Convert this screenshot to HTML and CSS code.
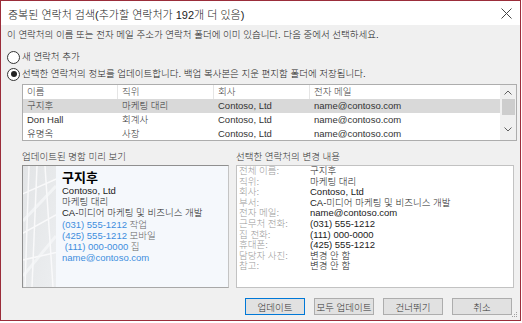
FILE: index.html
```html
<!DOCTYPE html>
<html>
<head>
    <title>중복된 연락처 검색</title>
    <link rel="stylesheet" href="styles.css">
</head>
<body>
    <div class="window">
        <div class="titlebar">
            <span class="title">중복된 연락처 검색(추가할 연락처가 192개 더 있음)</span>
            <svg class="close" width="11" height="11" viewBox="0 0 11 11">
                <path d="M0.5 0.5 L10.5 10.5 M10.5 0.5 L0.5 10.5" stroke="#444" stroke-width="1" fill="none"/>
            </svg>
        </div>

        <div class="content">
            <p class="intro">이 연락처의 이름 또는 전자 메일 주소가 연락처 폴더에 이미 있습니다. 다음 중에서 선택하세요.</p>

            <label class="radio first"><span class="dot"></span>새 연락처 추가</label>
            <label class="radio checked"><span class="dot"></span>선택한 연락처의 정보를 업데이트합니다. 백업 복사본은 지운 편지함 폴더에 저장됩니다.</label>

            <div class="list">
                <div class="grid">
                    <div class="row head">
                        <span>이름</span><span>직위</span><span>회사</span><span>전자 메일</span>
                    </div>
                    <div class="row selected">
                        <span>구지후</span><span>마케팅 대리</span><span>Contoso, Ltd</span><span>name@contoso.com</span>
                    </div>
                    <div class="row">
                        <span>Don Hall</span><span>회계사</span><span>Contoso, Ltd</span><span>name@contoso.com</span>
                    </div>
                    <div class="row">
                        <span>유명옥</span><span>사장</span><span>Contoso, Ltd</span><span>name@contoso.com</span>
                    </div>
                </div>
                <div class="scrollbar">
                    <svg width="8" height="5" viewBox="0 0 8 5"><path d="M0.5 4.5 L4 1 L7.5 4.5" stroke="#606060" fill="none"/></svg>
                    <div class="thumb"></div>
                    <div class="track"></div>
                    <svg width="8" height="5" viewBox="0 0 8 5"><path d="M0.5 0.5 L4 4 L7.5 0.5" stroke="#606060" fill="none"/></svg>
                </div>
            </div>

            <div class="panes">
                <div class="pane left">
                    <div class="pane-label">업데이트된 명함 미리 보기</div>
                    <div class="card">
                        <svg class="card-art" width="33" height="121" viewBox="0 0 33 121" preserveAspectRatio="none">
                            <defs>
                                <linearGradient id="g" x1="0" y1="0" x2="1" y2="1">
                                    <stop offset="0" stop-color="#e2e4e6"/>
                                    <stop offset="1" stop-color="#eceef0"/>
                                </linearGradient>
                            </defs>
                            <rect width="33" height="121" fill="url(#g)"/>
                            <path d="M6 0 L2 121 M14 0 L9 121 M-5 30 L40 10 M-5 70 L40 45 M-5 95 L40 85 M22 0 L30 121" stroke="#fbfbfc" stroke-width="1.5" fill="none" opacity="0.9"/>
                            <path d="M0 55 L33 20 M0 110 L33 70" stroke="#f7f8f9" stroke-width="3" fill="none" opacity="0.7"/>
                        </svg>
                        <div class="card-text">
                            <div class="card-name">구지후</div>
                            <div>Contoso, Ltd</div>
                            <div>마케팅 대리</div>
                            <div>CA-미디어 마케팅 및 비즈니스 개발</div>
                            <div><span class="blue">(031) 555-1212</span> <span class="muted">작업</span></div>
                            <div><span class="blue">(425) 555-1212</span> <span class="muted">모바일</span></div>
                            <div>&nbsp;<span class="blue">(111) 000-0000</span> <span class="muted">집</span></div>
                            <div class="blue">name@contoso.com</div>
                        </div>
                    </div>
                </div>
                <div class="pane right">
                    <div class="pane-label">선택한 연락처의 변경 내용</div>
                    <div class="changes">
                        <div class="field"><span class="key">전체 이름:</span><span>구지후</span></div>
                        <div class="field"><span class="key">직위:</span><span>마케팅 대리</span></div>
                        <div class="field"><span class="key">회사:</span><span>Contoso, Ltd</span></div>
                        <div class="field"><span class="key">부서:</span><span>CA-미디어 마케팅 및 비즈니스 개발</span></div>
                        <div class="field"><span class="key">전자 메일:</span><span>name@contoso.com</span></div>
                        <div class="field"><span class="key">근무처 전화:</span><span>(031) 555-1212</span></div>
                        <div class="field"><span class="key">집 전화:</span><span>(111) 000-0000</span></div>
                        <div class="field"><span class="key">휴대폰:</span><span>(425) 555-1212</span></div>
                        <div class="field"><span class="key">담당자 사진:</span><span>변경 안 함</span></div>
                        <div class="field"><span class="key">참고:</span><span>변경 안 함</span></div>
                    </div>
                </div>
            </div>

            <div class="buttons">
                <button class="default">업데이트</button>
                <button>모두 업데이트</button>
                <button>건너뛰기</button>
                <button>취소</button>
            </div>
        </div>

        <svg class="grip" width="6" height="6" viewBox="0 0 6 6">
            <rect x="4" y="0" width="1" height="1" fill="#a0a0a0"/>
            <rect x="2" y="2" width="1" height="1" fill="#a0a0a0"/>
            <rect x="4" y="2" width="1" height="1" fill="#a0a0a0"/>
            <rect x="0" y="4" width="1" height="1" fill="#a0a0a0"/>
            <rect x="2" y="4" width="1" height="1" fill="#a0a0a0"/>
            <rect x="4" y="4" width="1" height="1" fill="#a0a0a0"/>
        </svg>
    </div>
</body>
</html>
```

FILE: styles.css
```css
body {
    margin: 0;
    background-color: #fff;
    font-family: "Liberation Sans", "Noto Sans CJK KR", sans-serif;
    font-size: 9.5px;
    font-weight: 300;
    color: #1a1a1a;
}

.window {
    position: relative;
    width: 521px;
    height: 321px;
    box-sizing: border-box;
    border: 1px solid #9b2d3a;
    background-color: #f0f0f0;
    display: flex;
    flex-direction: column;
}

.titlebar {
    height: 24px;
    background-color: #fff;
    display: flex;
    align-items: center;
    justify-content: space-between;
    padding: 0 8px 0 7px;
}

.title {
    font-size: 11px;
    color: #222;
    padding-top: 2px;
}

.content {
    flex: 1;
    display: flex;
    flex-direction: column;
    padding-left: 6px;
}

.intro {
    margin: 4px 0 0 0;
    line-height: 12px;
}

.radio {
    display: flex;
    align-items: center;
    height: 14px;
    line-height: 14px;
}

.radio.first {
    margin-top: 9px;
}

.radio.checked {
    margin-top: 3px;
}

.dot {
    width: 11px;
    height: 11px;
    border: 1px solid #333;
    border-radius: 50%;
    background-color: #fff;
    margin-right: 2px;
    display: flex;
    align-items: center;
    justify-content: center;
}

.radio.checked .dot::after {
    content: "";
    width: 6px;
    height: 6px;
    border-radius: 50%;
    background-color: #222;
}

/* contact list */

.list {
    margin: 3px 0 0 15px;
    width: 495px;
    height: 57px;
    box-sizing: border-box;
    border: 1px solid #adadad;
    background-color: #fff;
    display: flex;
    overflow: hidden;
}

.grid {
    flex: 1;
}

.row {
    display: grid;
    grid-template-columns: 95px 96px 96px 1fr;
    height: 14px;
    line-height: 14px;
    color: #333;
}

.row span {
    padding-left: 4px;
    white-space: nowrap;
    overflow: hidden;
}

.row.head span {
    border-right: 1px solid #e5e5e5;
    color: #444;
}

.row.head span:last-child {
    border-right: none;
}

.row.selected {
    background-color: #d9d9d9;
}

.scrollbar {
    width: 16px;
    background-color: #f0f0f0;
    display: flex;
    flex-direction: column;
    align-items: center;
    padding-top: 5px;
}

.thumb {
    width: 13px;
    height: 16px;
    margin-top: 4px;
    background-color: #cdcdcd;
}

.track {
    height: 12px;
}

/* lower panes */

.panes {
    display: flex;
    gap: 7px;
    margin: 10px 0 0 15px;
}

.pane-label {
    line-height: 12px;
    color: #333;
    margin-bottom: 2px;
}

.pane.left {
    width: 207px;
}

.pane.right {
    width: 278px;
}

.card {
    height: 123px;
    box-sizing: border-box;
    border: 1px solid #8f8f8f;
    border-right-color: #c4c4c4;
    border-bottom-color: #a8a8a8;
    background-color: #f5f8fc;
    display: flex;
}

.card-art {
    width: 33px;
    height: 121px;
    display: block;
}

.card-text {
    padding: 4px 0 0 6px;
    line-height: 11.2px;
    color: #222;
}

.card-name {
    font-size: 13px;
    font-weight: bold;
    line-height: 15px;
    color: #000;
}

.blue {
    color: #3e8ede;
}

.muted {
    color: #666;
}

.changes {
    height: 123px;
    box-sizing: border-box;
    border: 1px solid #c2c2c2;
    background-color: #fff;
    padding: 0 0 0 2px;
}

.field {
    display: flex;
    line-height: 10.6px;
}

.key {
    width: 71px;
    color: #9a9a9a;
}

/* buttons */

.buttons {
    display: flex;
    justify-content: flex-end;
    gap: 9px;
    margin: 10px 8px 0 0;
}

button {
    width: 60px;
    height: 17px;
    padding: 0;
    font-family: inherit;
    font-size: 9.5px;
    font-weight: 300;
    color: #333;
    background-color: #e1e1e1;
    border: 1px solid #adadad;
    cursor: pointer;
}

button.default {
    border-color: #0078d7;
}

button:hover {
    background-color: #e5f1fb;
}

.grip {
    position: absolute;
    right: 2px;
    bottom: 2px;
}
```
